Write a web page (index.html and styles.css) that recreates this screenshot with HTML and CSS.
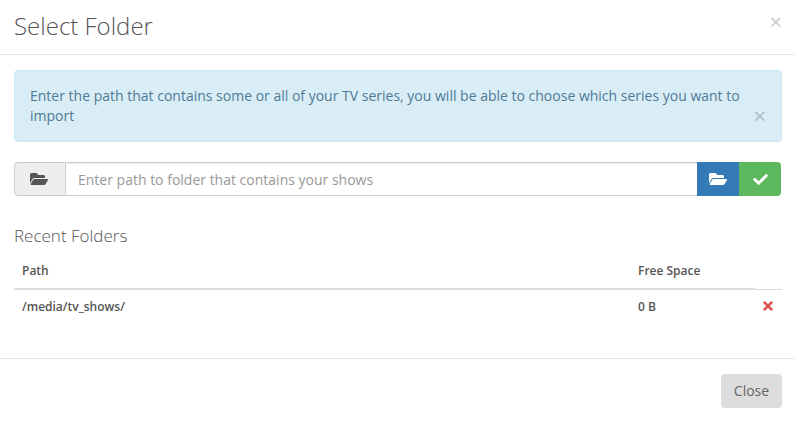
FILE: index.html
```html
<!DOCTYPE html>
<html lang="en">
<head>
<meta charset="utf-8">
<title>Select Folder</title>
<link rel="stylesheet" href="styles.css">
</head>
<body>
<div class="modal">
  <header class="modal-header">
    <h1 class="modal-title">Select Folder</h1>
    <span class="dismiss dismiss-header">×</span>
  </header>
  <main class="modal-body">
    <div class="alert">
      <p class="alert-text">Enter the path that contains some or all of your TV series, you will be able to choose which series you want to import</p>
      <span class="dismiss dismiss-alert">×</span>
    </div>
    <div class="input-group">
      <span class="addon">
        <svg class="icon" viewBox="0 0 576 512"><path d="M572.694 292.093L500.27 416.248A63.997 63.997 0 0 1 444.989 448H45.025c-18.523 0-30.064-20.093-20.731-36.093l72.424-124.155A64 64 0 0 1 152 256h399.964c18.523 0 30.064 20.093 20.73 36.093zM152 224h328v-48c0-26.51-21.49-48-48-48H272l-64-64H48C21.49 64 0 85.49 0 112v278.046l69.077-118.418C86.214 242.25 117.989 224 152 224z"/></svg>
      </span>
      <input class="path-input" type="text" placeholder="Enter path to folder that contains your shows">
      <button class="btn btn-blue" type="button">
        <svg class="icon" viewBox="0 0 576 512"><path d="M572.694 292.093L500.27 416.248A63.997 63.997 0 0 1 444.989 448H45.025c-18.523 0-30.064-20.093-20.731-36.093l72.424-124.155A64 64 0 0 1 152 256h399.964c18.523 0 30.064 20.093 20.73 36.093zM152 224h328v-48c0-26.51-21.49-48-48-48H272l-64-64H48C21.49 64 0 85.49 0 112v278.046l69.077-118.418C86.214 242.25 117.989 224 152 224z"/></svg>
      </button>
      <button class="btn btn-green" type="button">
        <svg class="icon icon-check" viewBox="0 0 512 512"><path d="M173.898 439.404l-166.4-166.4c-9.997-9.997-9.997-26.206 0-36.204l36.203-36.204c9.997-9.998 26.207-9.998 36.204 0L192 312.69 432.095 72.596c9.997-9.997 26.207-9.997 36.204 0l36.203 36.204c9.997 9.997 9.997 26.206 0 36.204l-294.4 294.401c-9.998 9.997-26.207 9.997-36.204-.001z"/></svg>
      </button>
    </div>
    <h2 class="section-title">Recent Folders</h2>
    <table class="folders">
      <thead>
        <tr>
          <th class="col-path">Path</th>
          <th class="col-space">Free Space</th>
          <th class="col-action"></th>
        </tr>
      </thead>
      <tbody>
        <tr>
          <td>/media/tv_shows/</td>
          <td>0 B</td>
          <td class="cell-action">
            <svg class="icon-remove" viewBox="0 0 352 512"><path d="M242.72 256l100.07-100.07c12.28-12.28 12.28-32.19 0-44.48l-22.24-22.24c-12.28-12.28-32.19-12.28-44.48 0L176 189.28 75.93 89.21c-12.28-12.28-32.19-12.28-44.48 0L9.21 111.45c-12.28 12.28-12.28 32.19 0 44.48L109.28 256 9.21 356.07c-12.28 12.28-12.28 32.19 0 44.48l22.24 22.24c12.28 12.28 32.2 12.28 44.48 0L176 322.72l100.07 100.07c12.28 12.28 32.2 12.28 44.48 0l22.24-22.24c12.28-12.28 12.28-32.19 0-44.48L242.72 256z"/></svg>
          </td>
        </tr>
      </tbody>
    </table>
  </main>
  <footer class="modal-footer">
    <button class="btn-close" type="button">Close</button>
  </footer>
</div>
</body>
</html>
```
FILE: styles.css
```css
* { box-sizing: border-box; }
html, body { margin: 0; padding: 0; height: 100%; background: #fff; }
body { font-family: "Open Sans", sans-serif; font-size: 14px; line-height: 20px; color: #555; overflow: hidden; }
.modal { width: 795px; height: 421px; display: flex; flex-direction: column; }

.modal-header { height: 55px; flex: none; border-bottom: 1px solid #e5e5e5; padding: 0 14px; display: flex; align-items: center; justify-content: space-between; }
.modal-title { margin: 0 0 3px; font-size: 24px; font-weight: 300; color: #555; line-height: 50px; }

.dismiss { font-weight: 400; color: #c9c9c9; line-height: 1; font-size: 22px; }
.dismiss-header { margin-top: -12px; margin-right: -1px; }
.dismiss-alert { position: absolute; right: 15px; top: 33px; color: #a9bcc7; }

.modal-body { flex: none; height: 303px; padding: 15px 13px 0 14px; }

.alert { position: relative; height: 72px; padding: 15px; background: #d9edf7; border: 1px solid #c8e6f3; border-radius: 4px; color: #4f7a94; }
.alert-text { margin: 0; padding-right: 20px; }

.input-group { display: flex; height: 34px; margin-top: 20px; margin-right: 1px; }
.addon { width: 52px; flex: none; display: flex; align-items: center; justify-content: center; padding-right: 2px; background: #eee; border: 1px solid #ccc; border-radius: 4px 0 0 4px; color: #555; }
.path-input { flex: 1; min-width: 0; height: 34px; border: 1px solid #ccc; border-left: 0; border-right: 0; padding: 0 12px; font: inherit; color: #555; background: #fff; outline: none; box-shadow: inset 0 1px 1px rgba(0,0,0,.075); }
.path-input::placeholder { color: #999; opacity: 1; }
.btn { width: 42px; flex: none; height: 34px; padding: 0; border: 0; display: flex; align-items: center; justify-content: center; color: #fff; }
.btn-blue { background: #337ab7; }
.btn-green { background: #5cb85c; border-radius: 0 4px 4px 0; }
.icon { width: 18px; height: 16px; fill: currentColor; display: block; }
.icon-check { width: 15px; height: 15px; }

.section-title { margin: 29px 0 0; font-size: 17px; font-weight: 300; line-height: 22px; color: #555; }

.folders { width: 100%; margin-top: 9px; border-collapse: collapse; table-layout: fixed; font-size: 12px; color: #555; }
.folders th { text-align: left; font-weight: 600; padding: 5px 8px 0; height: 33px; vertical-align: top; border-bottom: 2px solid #ddd; }
.folders td { padding: 0 8px; height: 34px; font-weight: 600; }
.folders th.col-action { border-bottom: 1px solid #ddd; }
.col-space { width: 125px; }
.col-action { width: 27px; }
.cell-action { padding: 0 !important; }
.icon-remove { width: 10px; height: 14px; display: block; margin-left: 8px; fill: #d9534f; }

.modal-footer { flex: 1; border-top: 1px solid #e5e5e5; padding: 15px 13px 0 0; display: flex; justify-content: flex-end; align-items: flex-start; }
.btn-close { width: 61px; height: 34px; background: #ddd; border: 0; border-radius: 4px; font: inherit; color: #666; padding: 0; }
```
